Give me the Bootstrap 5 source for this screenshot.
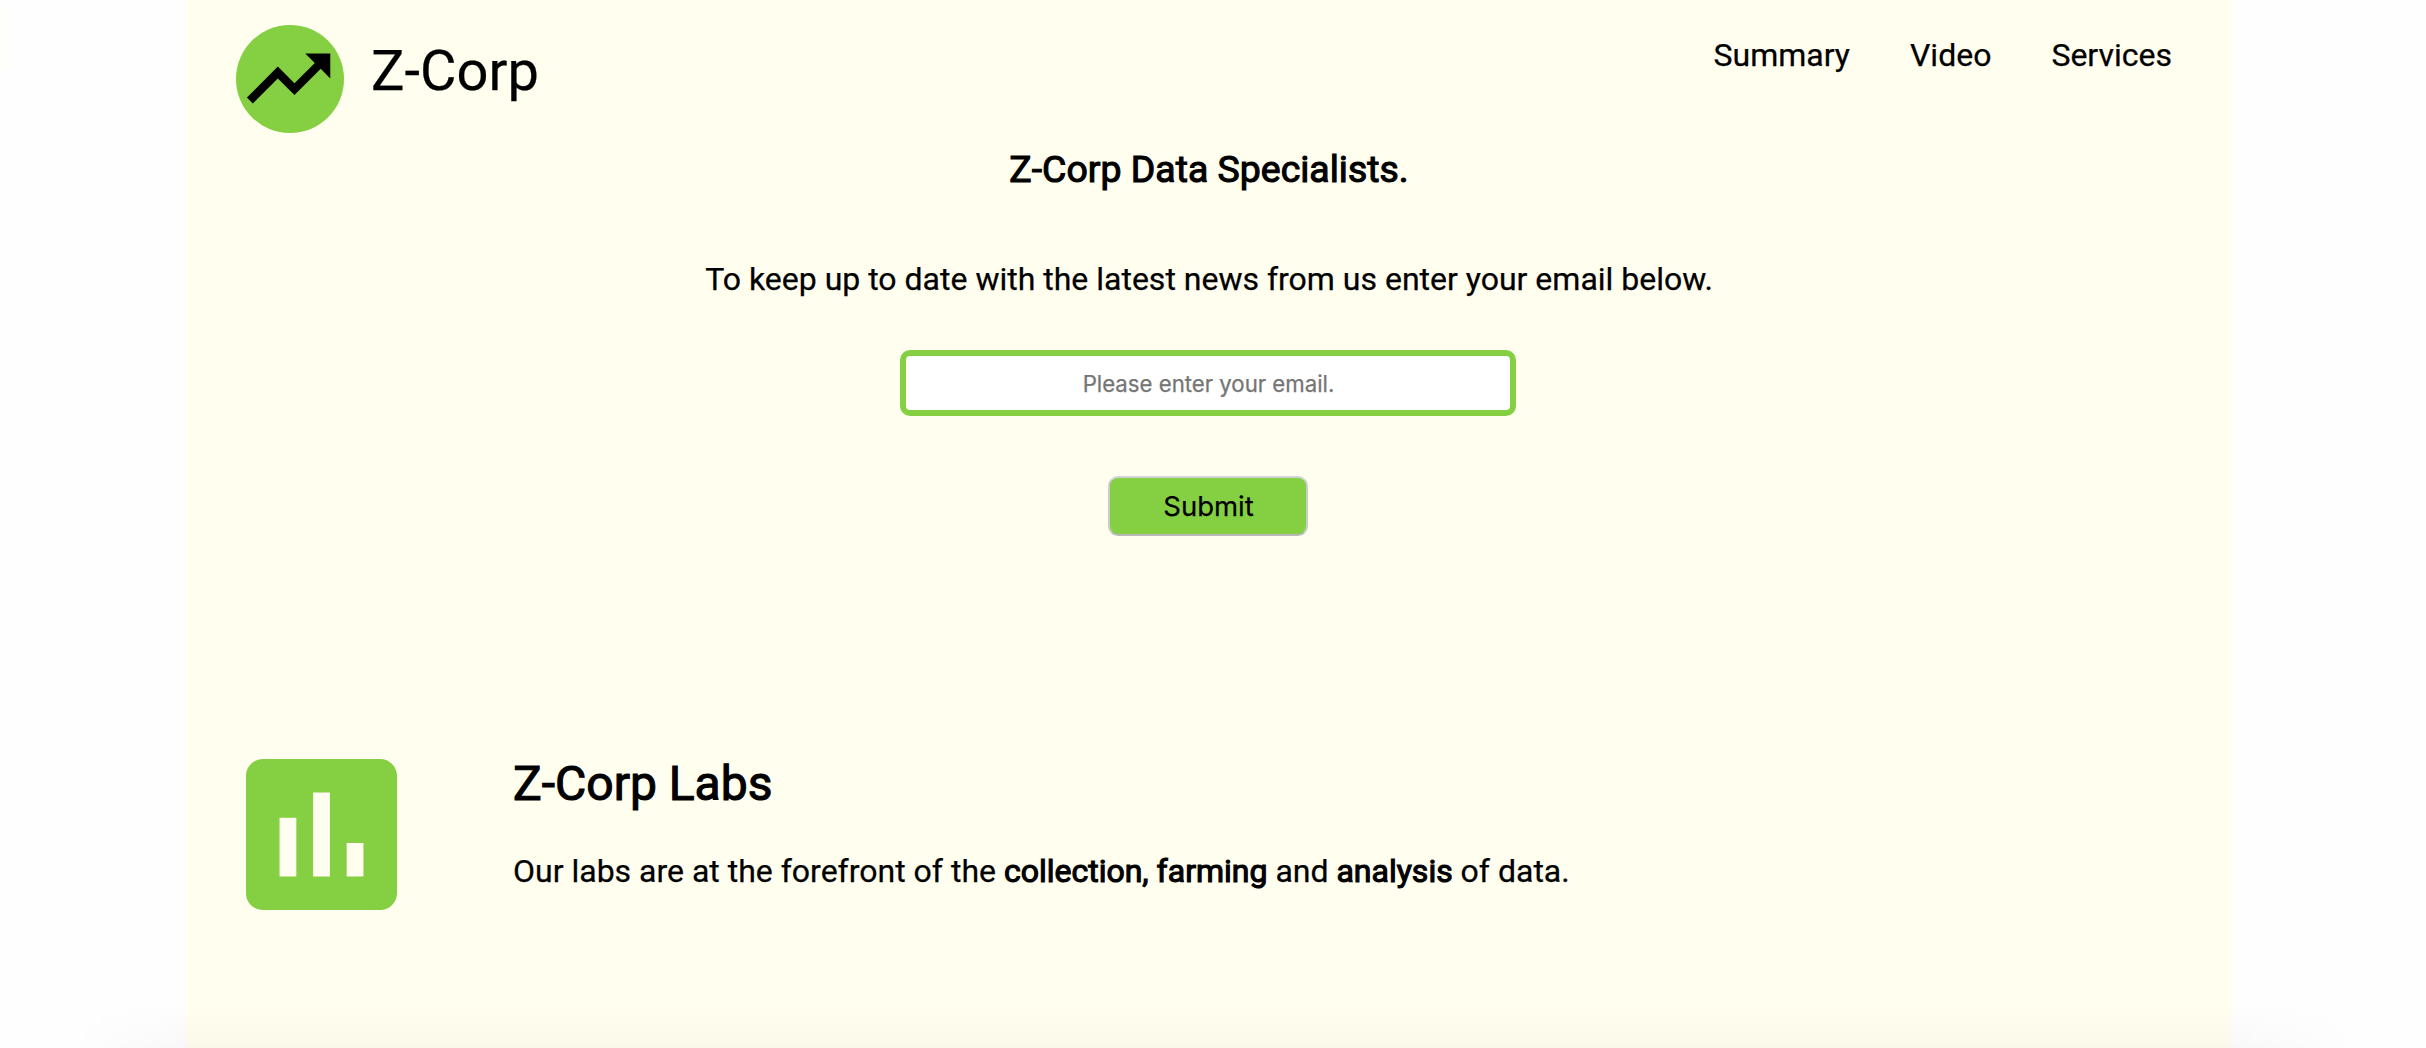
<!DOCTYPE html>
<html lang="en">
<head>
<meta charset="utf-8">
<meta name="viewport" content="width=device-width, initial-scale=1">
<title>Z-Corp</title>
<link rel="stylesheet" href="https://cdn.jsdelivr.net/npm/bootstrap@5.3.0/dist/css/bootstrap.min.css">
<style>
  :root { --leaf: #84d042; --cream: #fffeef; }
  body { background: #fefefe; color: #000; font-family: Roboto, sans-serif; font-size: 32px; line-height: 38px; -webkit-text-stroke: .25px; }
  .sheet { width: 2046px; height: 1048px; margin-left: 186px; background: var(--cream); }
  .topbar { height: 147px; padding: 25px 60px 0 50px; }
  .brand-mark { width: 108px; height: 108px; }
  .brand-name { font-size: 56px; line-height: 66px; margin: 13px 0 0 27px; color: #000; }
  .topnav { gap: 60px; margin-top: 11px; }
  .topnav .nav-link { color: #000; padding: 0; }
  .faux-bold { font-weight: 400; -webkit-text-stroke: 1.1px #000; }
  .headline { font-size: 37.44px; line-height: 44px; margin: 0 0 69px; }
  .signup-note { margin: 0 0 52px; }
  .email-box { width: 616px; height: 66px; margin-right: 2px; border: 6px solid var(--leaf); border-radius: 10px; font: 22.2px Inter, sans-serif; padding: 1px 0 0 1px; }
  .email-box::placeholder { color: #757575; opacity: 1; }
  .send-btn { width: 200px; height: 60px; margin: 60px 2px 0 0; padding: 0 0 0 1px; border: 2px solid; border-color: #d3d3d3 #cbcbcb #b9b9b9; border-radius: 10px; background: var(--leaf); color: #000; font: 27.5px Inter, sans-serif; }
  .labs { margin-top: 223px; padding-left: 59.5px; }
  .labs-mark { width: 151px; height: 151px; }
  .labs-copy { margin-left: 116.5px; }
  .labs-title { font-size: 48px; line-height: 56px; margin: -3px 0 40px; }
  .dock-shade { bottom: 0; left: 70px; right: 70px; height: 42px; pointer-events: none; background: linear-gradient(transparent, rgba(30,10,30,.022)); -webkit-mask-image: linear-gradient(90deg, transparent, #000 120px, #000 calc(100% - 120px), transparent); }
  .edge-tab { left: 0; top: 10px; width: 8px; height: 58px; background: #fffffa; border-radius: 0 3px 3px 0; }
</style>
<script src="https://cdn.jsdelivr.net/npm/bootstrap@5.3.0/dist/js/bootstrap.bundle.min.js"></script>
</head>
<body class="overflow-hidden position-relative">
<div class="sheet">
  <header class="topbar d-flex align-items-start justify-content-between">
    <a class="d-flex align-items-start text-decoration-none" href="#">
      <svg class="brand-mark" viewBox="0 0 108 108" aria-hidden="true">
        <circle cx="54" cy="54" r="54" fill="#84d042"/>
        <path transform="translate(2.6 3.4) scale(4.167)" d="M16 6l2.29 2.29-4.88 4.88-4-4L2 16.59 3.41 18l6-6 4 4 6.3-6.29L22 12V6z"/>
      </svg>
      <span class="brand-name">Z-Corp</span>
    </a>
    <nav class="topnav nav">
      <a class="nav-link" href="#summary">Summary</a>
      <a class="nav-link" href="#video">Video</a>
      <a class="nav-link" href="#services">Services</a>
    </nav>
  </header>
  <main>
    <form class="d-flex flex-column align-items-center text-center">
      <h3 class="headline faux-bold">Z-Corp Data Specialists.</h3>
      <p class="signup-note">To keep up to date with the latest news from us enter your email below.</p>
      <input class="email-box form-control text-center" type="email" placeholder="Please enter your email.">
      <button class="send-btn btn" type="button">Submit</button>
    </form>
    <section class="labs d-flex align-items-start" id="summary">
      <svg class="labs-mark" viewBox="3 3 18 18" aria-hidden="true">
        <path fill="#84d042" d="M19 3H5c-1.1 0-2 .9-2 2v14c0 1.1.9 2 2 2h14c1.1 0 2-.9 2-2V5c0-1.1-.9-2-2-2zM9 17H7v-7h2v7zm4 0h-2V7h2v10zm4 0h-2v-4h2v4z"/>
      </svg>
      <div class="labs-copy">
        <h2 class="labs-title faux-bold">Z-Corp Labs</h2>
        <p class="mb-0">Our labs are at the forefront of the <strong class="faux-bold">collection, farming</strong> and <strong class="faux-bold">analysis</strong> of data.</p>
      </div>
    </section>
  </main>
</div>
<div class="edge-tab position-absolute"></div>
<div class="dock-shade position-absolute"></div>
</body>
</html>
